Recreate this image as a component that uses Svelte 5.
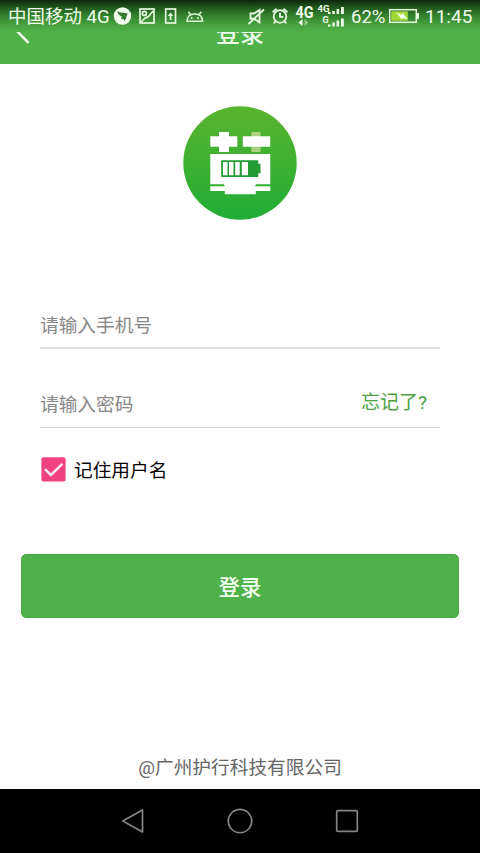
<script>
  let phone = $state('');
  let password = $state('');
  let remember = $state(true);
</script>

<div class="screen">
  <div class="status">
    <span class="carrier">中国移动 4G</span>
    <svg class="notices" width="94" height="20" viewBox="112 6 94 20">
      <circle cx="122.5" cy="16" r="8.7" fill="#f2ffed" />
      <path d="M117 11.2l4 1.3 6.8 1-1.2 2.4-.6 2.6-1.4 2.6-1.3-2.2-2.3.2.8-2.4-3-2.1z" fill="#347b2e" />
      <g fill="none" stroke="#e5f9df" stroke-width="1.7">
        <rect x="140" y="9" width="14" height="14" />
        <circle cx="144.4" cy="13.4" r="2" />
        <path d="M141 22l4-3.8 3.5-1.7 4.5-5.5" />
        <rect x="165.7" y="9" width="9.8" height="14" />
        <path d="M170.6 20v-6" />
      </g>
      <path d="M167.8 16l2.8-3.6 2.8 3.6z" fill="#e5f9df" />
      <path d="M187 21.3c.2-4.8 3.2-7.2 7.8-7.2s7.6 2.4 7.8 7.2zM190.7 14.8l-2.4-3M198.9 14.8l2.4-3" fill="none" stroke="#d9f3d3" stroke-width="1.5" />
      <circle cx="191.7" cy="18" r="1" fill="#e5f9df" /><circle cx="197.9" cy="18" r="1" fill="#e5f9df" />
    </svg>
    <svg class="signals" width="100" height="26" viewBox="246 3 100 26">
      <g fill="none" stroke="#e5f9df" stroke-width="1.8">
        <path d="M250.5 13.5h3.5l5.5-3.6v12.6l-5.5-3.8h-3.5zM248.5 24l15.5-14.5" />
        <circle cx="280" cy="16.5" r="6.3" />
        <path d="M280 12.8v4h3.4M272.6 12.2l4-3.5M287.4 12.2l-4-3.5M275.5 21.3l-1.8 2M284.5 21.3l1.8 2" />
      </g>
      <g fill="#effdea" font-family="Roboto, sans-serif" font-weight="700">
        <text x="295.5" y="17.5" font-size="16" textLength="18" lengthAdjust="spacingAndGlyphs">4G</text>
        <text x="317.5" y="11.8" font-size="9.5" textLength="12" lengthAdjust="spacingAndGlyphs">4G</text>
        <text x="322.5" y="23" font-size="9">G</text>
      </g>
      <path d="M298.5 22.5l4-3.6v7.2z" fill="#effdea" /><path d="M308.5 22.5l-4-3.4v6.8z" fill="#8fc788" />
      <g fill="#effdea">
        <path d="M328 12h2.5v2H328zM332.3 11h2.5v3h-2.5zM336.6 9h2.5v5h-2.5zM341 7h2.8v7H341z" />
        <path d="M328 24.5h2.5v2H328zM332.3 22.5h2.5v4h-2.5zM336.6 20.5h2.5v6h-2.5zM341 18.5h2.8v8H341z" />
      </g>
    </svg>
    <span class="percent">62%</span>
    <svg class="battery" width="32" height="16" viewBox="388 8 32 16">
      <rect x="389.7" y="9.7" width="26.6" height="12.6" fill="none" stroke="#eaffdf" stroke-width="1.5" />
      <rect x="391.3" y="11.3" width="16.5" height="9.4" fill="#a3d83b" />
      <path d="M417 13h2v6h-2z" fill="#eaffdf" />
      <path d="M396.5 12.5l5.2 2.2 1-2 5 6.8-5-1.5-1 1.5z" fill="#f5ffef" />
    </svg>
    <span class="clock">11:45</span>
  </div>

  <header>
    <svg class="back" width="16" height="14" viewBox="16 32 16 14"><path d="M17 31l11.5 11.8" fill="none" stroke="#effbea" stroke-width="2.6" /></svg>
    <h1>登录</h1>
  </header>

  <main>
    <svg class="logo" width="114" height="114" viewBox="183 106 114 114">
      <defs>
        <linearGradient id="disc" x1="0" y1="0" x2="0" y2="1">
          <stop offset="0" stop-color="#5ab42d" /><stop offset="1" stop-color="#20ad36" />
        </linearGradient>
      </defs>
      <circle cx="240" cy="163" r="56.7" fill="url(#disc)" />
      <path d="M251.3 132h9.2v20h-9.2z" fill="#abd17d" />
      <path d="M219 132h10v4.3h8.3v10.4H229v5.3h-10v-5.3h-8.7v-10.4h8.7zM242.8 136.3h27.4v10.4h-27.4z" fill="#fff" />
      <path d="M210.3 154h60v30.3H256l-1 2h15.3v4.7h-14.5v3.3h-31V191h-14.5v-4.7h14.5l-1-2h-13.5z" fill="#fff" />
      <path d="M221.2 160.3h37v3.4h2.3v9.6h-2.3v3.6h-37z" fill="#249c35" />
      <path d="M223 162h4.5v13.2H223zM229 162h4.5v13.2H229zM235.2 162h4.5v13.2h-4.5zM241.8 162h6.2v13.2h-6.2z" fill="#fff" />
    </svg>

    <form onsubmit={(event) => event.preventDefault()}>
      <div class="field phone"><input type="tel" placeholder="请输入手机号" bind:value={phone} /></div>
      <div class="field password">
        <input type="password" placeholder="请输入密码" bind:value={password} />
        <a href="#forgot">忘记了?</a>
      </div>
      <label>
        <input type="checkbox" bind:checked={remember} />
        <svg width="25" height="25" viewBox="0 0 25 25">
          <rect x=".4" y=".3" width="24.2" height="24.2" rx="2" fill={remember ? '#f04281' : '#999'} />
          {#if remember}<path d="M3.8 12.2l6.1 5.8L21.4 6.8" fill="none" stroke="#ffeaf2" stroke-width="2.5" />{/if}
        </svg>
        <span>记住用户名</span>
      </label>
      <button type="submit">登录</button>
    </form>
    <footer>@广州护行科技有限公司</footer>
  </main>

  <nav>
    <svg width="24" height="26" viewBox="0 0 24 26"><path d="M21.5 2v22L1.8 13z" /></svg>
    <svg width="26" height="26" viewBox="0 0 26 26"><circle cx="13" cy="13" r="11.7" /></svg>
    <svg width="24" height="26" viewBox="0 0 24 26"><rect x="1.7" y="2.7" width="20.6" height="20.6" rx="1" /></svg>
  </nav>
</div>

<style>
  .screen {
    width: 480px;
    height: 853px;
    display: flex;
    flex-direction: column;
    overflow: hidden;
    background: #fefefe;
    font-family: Roboto, 'Noto Sans CJK SC', sans-serif;
  }
  .screen svg { display: block; flex: none; }
  .status {
    height: 32px;
    flex: none;
    display: flex;
    align-items: center;
    box-sizing: border-box;
    padding-left: 8px;
    background: linear-gradient(#0b270b, #1c4e19 18%, #33802e 48%, #49a440 80%, #4fb146);
    color: #effdea;
    white-space: nowrap;
    line-height: 32px;
  }
  .carrier { width: 104px; font-size: 18.5px; padding-top: 1px; box-sizing: border-box; }
  .signals { margin-left: 40px; }
  .percent { width: 37px; margin-left: 5px; font-size: 18.5px; padding-top: 1px; }
  .clock { margin-left: 5px; font-size: 19px; padding-top: 1px; }
  header {
    height: 32px;
    flex: none;
    display: flex;
    justify-content: center;
    background: #4fb248;
    overflow: hidden;
  }
  .back { margin-left: 16px; margin-right: -32px; }
  h1 {
    margin: -13px 0 0;
    flex: 1;
    height: 30px;
    line-height: 30px;
    font-size: 24px;
    font-weight: 500;
    text-align: center;
    color: #effbea;
  }
  main { height: 725px; flex: none; display: flex; flex-direction: column; align-items: center; }
  .logo { margin-top: 42px; }
  form { width: 438px; margin-top: 83px; display: flex; flex-direction: column; align-items: center; }
  .field {
    width: 400px;
    box-sizing: border-box;
    display: flex;
    align-items: center;
    border-bottom: 2px solid #e0e0e0;
  }
  .phone { height: 46px; }
  .phone input { padding-top: 2px; }
  .password { height: 79px; padding-top: 33px; border-bottom-width: 1px; border-color: #d2d2d2; }
  .field input {
    flex: 1;
    min-width: 0;
    height: 44px;
    box-sizing: border-box;
    padding: 1px 0 0;
    border: 0;
    outline: 0;
    background: none;
    font: 18.7px Roboto, 'Noto Sans CJK SC', sans-serif;
    color: #333;
  }
  .field input::placeholder { color: #888; opacity: 1; }
  a { margin: -9px 13px 0 0; font-size: 19px; color: #4ba143; text-decoration: none; }
  label {
    width: 398px;
    height: 32px;
    margin-top: 25px;
    display: flex;
    align-items: center;
    font-size: 18.7px;
    color: #050505;
  }
  label input { appearance: none; width: 0; height: 0; margin: 0; }
  label span { margin-left: 8px; padding-top: 3px; line-height: 30px; }
  button {
    width: 438px;
    height: 64px;
    margin-top: 69px;
    padding: 0 0 2px;
    border: 1px solid #48a941;
    border-radius: 5px;
    background: #4fb149;
    color: #f3fff0;
    font: 500 21.5px Roboto, 'Noto Sans CJK SC', sans-serif;
  }
  footer { margin-top: 134px; height: 32px; line-height: 32px; font-size: 18.7px; color: #666; }
  nav {
    height: 64px;
    flex: none;
    display: flex;
    justify-content: center;
    align-items: center;
    gap: 82px;
    background: #000;
  }
  nav svg { fill: none; stroke: #858585; stroke-width: 1.7; stroke-linejoin: round; }
</style>
